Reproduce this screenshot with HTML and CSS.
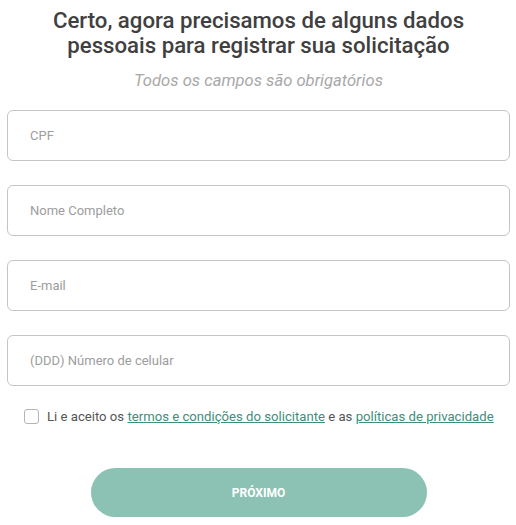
FILE: index.html
```html
<!DOCTYPE html>
<html lang="pt-BR">
<head>
	<meta charset="UTF-8">
	<title>Dados pessoais</title>
<link rel="stylesheet" href="styles.css">
</head>
<body>
<form class="form" action="#" method="post">
	<h1 class="title">Certo, agora precisamos de alguns dados pessoais para registrar sua solicitação</h1>
	<p class="subtitle">Todos os campos são obrigatórios</p>

	<div class="fields">
		<input class="field" type="text" placeholder="CPF">
		<input class="field" type="text" placeholder="Nome Completo">
		<input class="field" type="email" placeholder="E-mail">
		<input class="field" type="tel" placeholder="(DDD) Número de celular">
	</div>

	<label class="terms">
		<input class="check" type="checkbox">
		<span>Li e aceito os <a href="#" class="link">termos e condições do solicitante</a> e as <a href="#" class="link">políticas de privacidade</a></span>
	</label>

	<div class="actions">
		<a href="#" class="next">PRÓXIMO</a>
	</div>
</form>
</body>
</html>
```

FILE: styles.css
```css
	body{
		margin: 0;
		background: #fff;
		font-family: Roboto, "Liberation Sans", sans-serif;
	}
	.form{
		display: flex;
		flex-direction: column;
		padding: 8px 6px 0 7px;
	}
	.title{
		margin: 0 auto;
		width: 450px;
		text-align: center;
		font-size: 22.2px;
		font-weight: 500;
		line-height: 25px;
		color: #404040;
	}
	.subtitle{
		margin: 13px 0 0;
		text-align: center;
		font-size: 16.6px;
		line-height: 19px;
		font-style: italic;
		color: #a8a8a8;
	}
	.fields{
		display: flex;
		flex-direction: column;
		gap: 24px;
		margin-top: 20px;
	}
	.field{
		box-sizing: border-box;
		height: 51px;
		width: 100%;
		padding: 0 22px;
		border: 1px solid #c4c4c4;
		border-radius: 6px;
		font-family: inherit;
		font-size: 13px;
		color: #333;
		outline: none;
	}
	.field::placeholder{
		color: #9d9d9d;
	}
	.terms{
		display: flex;
		align-items: center;
		gap: 8px;
		margin: 23px 0 0 17px;
		font-size: 13.15px;
		color: #555;
	}
	.check{
		appearance: none;
		margin: 0;
		width: 15px;
		height: 15px;
		border: 1px solid #b5b5b5;
		border-radius: 3px;
		background: #fff;
	}
	.link{
		color: #3f8d7b;
		text-decoration: underline;
	}
	.actions{
		display: flex;
		justify-content: center;
		margin-top: 44px;
	}
	.next{
		display: flex;
		align-items: center;
		justify-content: center;
		width: 336px;
		height: 49px;
		border-radius: 25px;
		background-color: #8bc2b3;
		color: #fff;
		font-size: 12px;
		font-weight: 700;
		text-decoration: none;
	}
```
